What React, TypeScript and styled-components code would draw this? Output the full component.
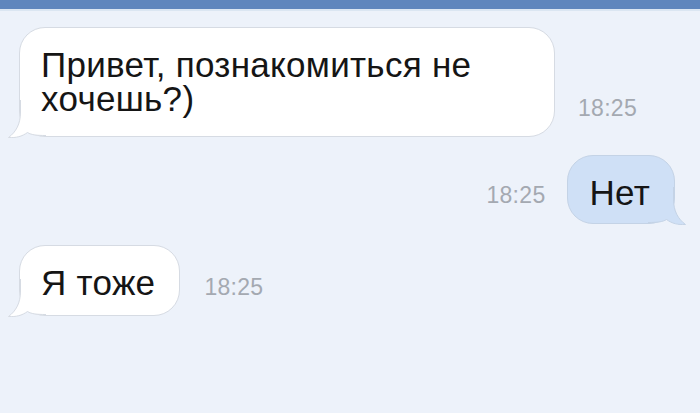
import React from "react";
import styled, { createGlobalStyle } from "styled-components";

const Global = createGlobalStyle`
  html, body { margin: 0; padding: 0; background: #edf2fa; }
  body { font-family: "Liberation Sans", Arial, sans-serif; width: 700px; height: 413px; overflow: hidden; }
`;

const Page = styled.div`
  width: 700px;
  height: 413px;
  background: #edf2fa;
  display: flex;
  flex-direction: column;
`;

const TopBar = styled.div`
  height: 9px;
  background: #5f86bd;
  border-bottom: 2px solid #dbe6f2;
  flex: none;
`;

const Thread = styled.div`
  display: flex;
  flex-direction: column;
  padding: 0 25px 0 19px;
`;

const Row = styled.div<{ $out?: boolean; $gap: number; $mt: number }>`
  display: flex;
  align-items: flex-end;
  justify-content: flex-start;
  flex-direction: ${(p) => (p.$out ? "row-reverse" : "row")};
  gap: ${(p) => p.$gap}px;
  margin-top: ${(p) => p.$mt}px;
`;

const Bubble = styled.div<{ $out?: boolean; $w?: number; $pb: number }>`
  position: relative;
  box-sizing: border-box;
  ${(p) => (p.$w ? `width: ${p.$w}px;` : "")}
  padding: 20px 24px ${(p) => p.$pb}px 21px;
  background: ${(p) => (p.$out ? "#cfe0f6" : "#ffffff")};
  border: 1px solid ${(p) => (p.$out ? "#c4d3e6" : "#d6dbe3")};
  border-radius: 26px;
  font-size: 35px;
  line-height: 34px;
  color: #151515;
  letter-spacing: 0.3px;
`;

const Text = styled.span`
  position: relative;
`;

const Tail = styled.svg<{ $out?: boolean }>`
  position: absolute;
  bottom: -2px;
  width: 38px;
  height: 38px;
  ${(p) => (p.$out ? "right: -12px; transform: scaleX(-1);" : "left: -12px;")}
`;

const Time = styled.span`
  font-size: 23px;
  line-height: 22px;
  color: #a4a9b1;
  margin-bottom: 18px;
  letter-spacing: 0.3px;
`;

function BubbleTail({ out }: { out?: boolean }) {
  const fill = out ? "#cfe0f6" : "#ffffff";
  const stroke = out ? "#c4d3e6" : "#d6dbe3";
  const edge =
    "M12.5,0 L12.5,12 C12.5,24 8,32 0.5,37.5 C8,38 14,36.5 19.5,32.5 C23.5,35 29,35.5 38,35.5";
  return (
    <Tail $out={out} viewBox="0 0 38 38">
      <path d={edge + " L38,0 Z"} fill={fill} />
      <path d={edge} fill="none" stroke={stroke} strokeWidth="1" />
    </Tail>
  );
}

type Msg = {
  text: string;
  time: string;
  out?: boolean;
  w?: number;
  gap: number;
  mt: number;
  pb: number;
};

const messages: Msg[] = [
  { text: "Привет, познакомиться не хочешь?)", time: "18:25", w: 536, gap: 23, mt: 16, pb: 20 },
  { text: "Нет", time: "18:25", out: true, gap: 22, mt: 18, pb: 13 },
  { text: "Я тоже", time: "18:25", gap: 24, mt: 21, pb: 15 },
];

export default function App() {
  return (
    <Page>
      <Global />
      <TopBar />
      <Thread>
        {messages.map((m, i) => (
          <Row key={i} $out={m.out} $gap={m.gap} $mt={m.mt}>
            <Bubble $out={m.out} $w={m.w} $pb={m.pb}>
              <BubbleTail out={m.out} />
              <Text>{m.text}</Text>
            </Bubble>
            <Time>{m.time}</Time>
          </Row>
        ))}
      </Thread>
    </Page>
  );
}
